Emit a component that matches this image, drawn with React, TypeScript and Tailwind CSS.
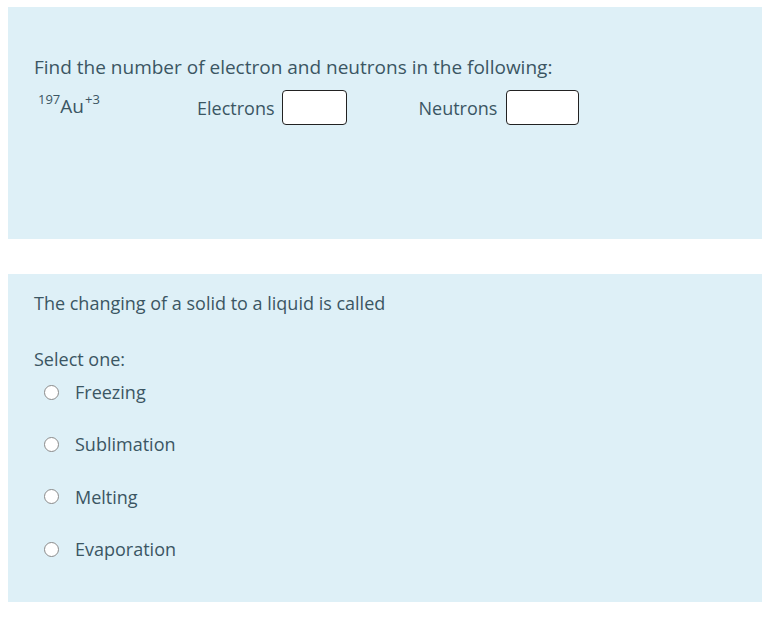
import React from "react";

const font = { fontFamily: '"Open Sans", "Noto Sans", sans-serif' };

function Radio({ label }: { label: string }) {
  return (
    <div className="flex items-center h-[26px]">
      <span className="ml-[10px] w-[15px] h-[15px] rounded-full border border-[#8a8a8a] bg-white" />
      <span className="ml-[16px]">{label}</span>
    </div>
  );
}

export default function App() {
  return (
    <div
      className="w-[762px] h-[627px] bg-white pt-[7px] pl-[8px] text-[#3b5663] text-[18px] leading-none"
      style={font}
    >
      <div className="bg-[#def0f7] h-[232px] pl-[26px] pt-[51px]">
        <div className="text-[19px]">Find the number of electron and neutrons in the following:</div>
        <div className="flex items-center mt-[13px] h-[35px]">
          <div className="w-[163px] pl-[4px] flex items-start -mt-[6px]">
            <span className="text-[13px] leading-none">197</span>
            <span className="mt-[4px] text-[19px]">Au</span>
            <span className="text-[13px] leading-none ml-[1px]">+3</span>
          </div>
          <span className="mt-[1px]">Electrons</span>
          <span className="ml-[7px] w-[65px] h-[35px] border border-[#222] rounded-[4px] bg-white" />
          <span className="ml-[72px] mt-[1px]">Neutrons</span>
          <span className="ml-[9px] w-[73px] h-[35px] border border-[#222] rounded-[4px] bg-white" />
        </div>
      </div>
      <div className="mt-[35px] bg-[#def0f7] h-[328px] pl-[26px] pt-[20px]">
        <div className="h-[18px] flex items-center">The changing of a solid to a liquid is called</div>
        <div className="mt-[38px] h-[18px] flex items-center">Select one:</div>
        <div className="mt-[11px] flex flex-col gap-[26.4px]">
          <Radio label="Freezing" />
          <Radio label="Sublimation" />
          <Radio label="Melting" />
          <Radio label="Evaporation" />
        </div>
      </div>
    </div>
  );
}
